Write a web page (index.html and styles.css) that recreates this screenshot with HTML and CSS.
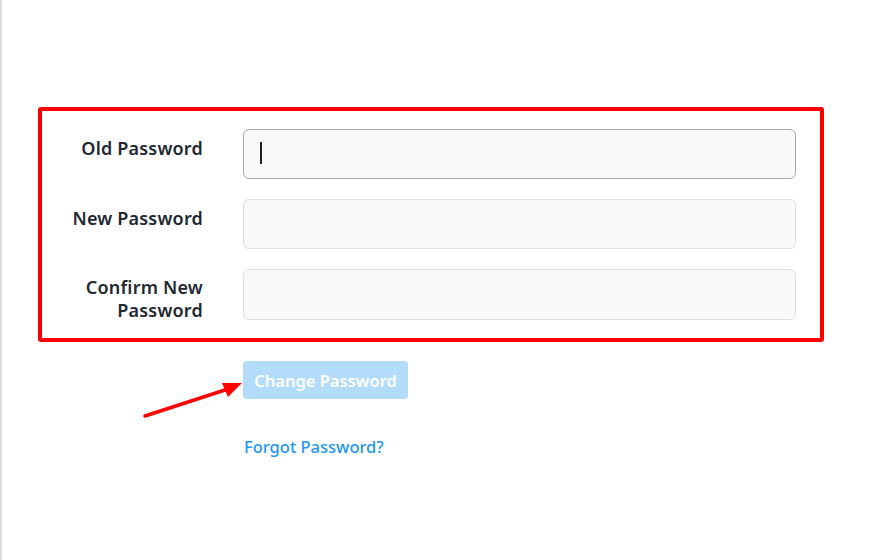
FILE: index.html
```html
<!DOCTYPE html>
<html>
<head>
<meta charset="utf-8">
<link rel="stylesheet" href="styles.css">
</head>
<body>
<div class="page">
  <div class="highlight">
    <div class="row">
      <label class="label">Old Password</label>
      <div class="input focused"><span class="caret"></span></div>
    </div>
    <div class="row">
      <label class="label">New Password</label>
      <div class="input"></div>
    </div>
    <div class="row tall">
      <label class="label">Confirm New<br>Password</label>
      <div class="input"></div>
    </div>
  </div>
  <div class="actions">
    <button class="btn">Change Password</button>
    <a class="link" href="#">Forgot Password?</a>
  </div>
  <svg class="arrow" width="120" height="50" viewBox="0 0 120 50">
    <line x1="7" y1="45" x2="90" y2="18" stroke="#f00" stroke-width="3.5" stroke-linecap="round"/>
    <polygon points="104,12 84,12 90,26" fill="#f00"/>
  </svg>
</div>
</body>
</html>
```

FILE: styles.css
```css
html, body {
  margin: 0;
  padding: 0;
  background: #fff;
}
body {
  font-family: "Noto Sans", "Open Sans", sans-serif;
  border-left: 2px solid #dcdcdc;
  min-height: 560px;
  box-sizing: border-box;
}
.page {
  position: relative;
  padding: 107px 0 0 36px;
}
.highlight {
  box-sizing: border-box;
  width: 786px;
  border: 4px solid #ff0000;
  border-radius: 3px;
  padding: 18px 24px 18px 0;
  display: flex;
  flex-direction: column;
  gap: 20px;
}
.row {
  display: flex;
  gap: 40px;
  align-items: flex-start;
}
.label {
  width: 161px;
  flex: none;
  text-align: right;
  font-size: 18px;
  font-weight: 600;
  color: #222831;
  line-height: 23px;
  padding-top: 8px;
  letter-spacing: 0.2px;
}
.row.tall .label {
  padding-top: 7px;
  margin-bottom: -4px;
}
.input {
  flex: 1;
  height: 48px;
  background: #f9f9f9;
  border: 1px solid #dedede;
  border-radius: 6px;
  position: relative;
}
.row.tall .input {
  height: 49px;
}
.input.focused {
  border-color: #a9a9a9;
}
.caret {
  position: absolute;
  left: 16px;
  top: 12px;
  width: 2px;
  height: 22px;
  background: #222;
}
.actions {
  padding-left: 205px;
  padding-top: 19px;
  display: flex;
  flex-direction: column;
  align-items: flex-start;
}
.btn {
  font-family: inherit;
  height: 38px;
  width: 165px;
  border: none;
  border-radius: 4px;
  background: #b2dcf9;
  color: #fff;
  font-size: 16.5px;
  font-weight: 600;
  padding: 0;
}
.link {
  margin-top: 37px;
  margin-left: 1px;
  color: #2196f3;
  font-size: 16.5px;
  font-weight: 500;
  text-decoration: none;
  line-height: 22px;
}
.arrow {
  position: absolute;
  left: 136px;
  top: 371px;
}
```
